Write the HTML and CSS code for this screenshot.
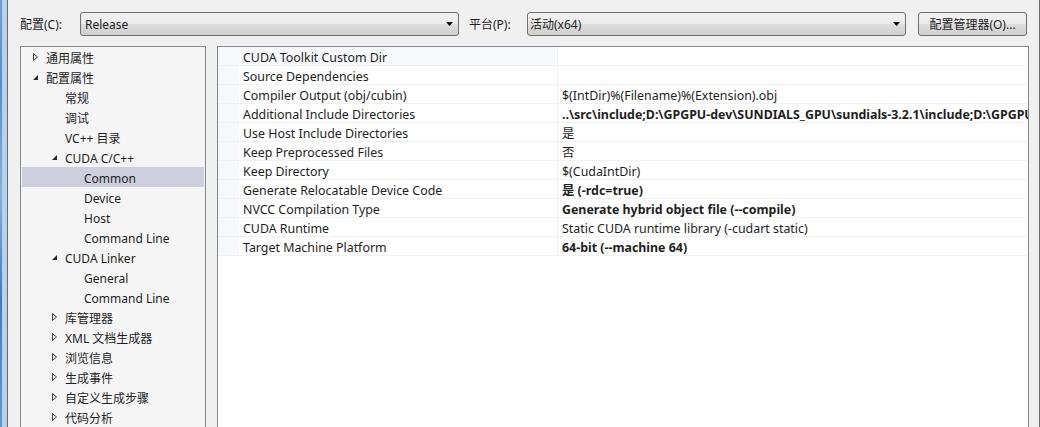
FILE: index.html
```html
<!DOCTYPE html>
<html>
<head>
<meta charset="utf-8">
<link rel="stylesheet" href="styles.css">
</head>
<body>
<div class="screen">
  <div class="desk"></div>
  <div class="window">
    <div class="topbar">
      <span class="lbl">配置(C):</span>
      <div class="combo combo1"><span>Release</span><svg class="arr" width="7" height="4" viewBox="0 0 7 4"><path d="M0 0H7L3.5 4Z" fill="#000"/></svg></div>
      <span class="lbl lbl2">平台(P):</span>
      <div class="combo combo2"><span>活动(x64)</span><svg class="arr" width="7" height="4" viewBox="0 0 7 4"><path d="M0 0H7L3.5 4Z" fill="#000"/></svg></div>
      <div class="btn">配置管理器(O)...</div>
    </div>
    <div class="body">
      <div class="tree">
        <div class="trow l0"><svg class="tw" width="13" height="8" viewBox="0 0 13 8"><path d="M0.5 0.5L4.5 4L0.5 7.5Z" fill="none" stroke="#3c3c3c"/></svg><span>通用属性</span></div>
        <div class="trow l0"><svg class="tw" width="13" height="8" viewBox="0 0 13 8"><path d="M5 2V7H0Z" fill="#262626"/></svg><span>配置属性</span></div>
        <div class="trow l1"><span class="tw"></span><span>常规</span></div>
        <div class="trow l1"><span class="tw"></span><span>调试</span></div>
        <div class="trow l1"><span class="tw"></span><span>VC++ 目录</span></div>
        <div class="trow l1"><svg class="tw" width="13" height="8" viewBox="0 0 13 8"><path d="M5 2V7H0Z" fill="#262626"/></svg><span>CUDA C/C++</span></div>
        <div class="trow l2 sel"><span class="tw"></span><span>Common</span></div>
        <div class="trow l2"><span class="tw"></span><span>Device</span></div>
        <div class="trow l2"><span class="tw"></span><span>Host</span></div>
        <div class="trow l2"><span class="tw"></span><span>Command Line</span></div>
        <div class="trow l1"><svg class="tw" width="13" height="8" viewBox="0 0 13 8"><path d="M5 2V7H0Z" fill="#262626"/></svg><span>CUDA Linker</span></div>
        <div class="trow l2"><span class="tw"></span><span>General</span></div>
        <div class="trow l2"><span class="tw"></span><span>Command Line</span></div>
        <div class="trow l1"><svg class="tw" width="13" height="8" viewBox="0 0 13 8"><path d="M0.5 0.5L4.5 4L0.5 7.5Z" fill="none" stroke="#3c3c3c"/></svg><span>库管理器</span></div>
        <div class="trow l1"><svg class="tw" width="13" height="8" viewBox="0 0 13 8"><path d="M0.5 0.5L4.5 4L0.5 7.5Z" fill="none" stroke="#3c3c3c"/></svg><span>XML 文档生成器</span></div>
        <div class="trow l1"><svg class="tw" width="13" height="8" viewBox="0 0 13 8"><path d="M0.5 0.5L4.5 4L0.5 7.5Z" fill="none" stroke="#3c3c3c"/></svg><span>浏览信息</span></div>
        <div class="trow l1"><svg class="tw" width="13" height="8" viewBox="0 0 13 8"><path d="M0.5 0.5L4.5 4L0.5 7.5Z" fill="none" stroke="#3c3c3c"/></svg><span>生成事件</span></div>
        <div class="trow l1"><svg class="tw" width="13" height="8" viewBox="0 0 13 8"><path d="M0.5 0.5L4.5 4L0.5 7.5Z" fill="none" stroke="#3c3c3c"/></svg><span>自定义生成步骤</span></div>
        <div class="trow l1"><svg class="tw" width="13" height="8" viewBox="0 0 13 8"><path d="M0.5 0.5L4.5 4L0.5 7.5Z" fill="none" stroke="#3c3c3c"/></svg><span>代码分析</span></div>
      </div>
      <div class="grid">
        <div class="prow first"><div class="gut"></div><div class="name">CUDA Toolkit Custom Dir</div><div class="val"></div></div>
        <div class="prow"><div class="gut"></div><div class="name">Source Dependencies</div><div class="val"></div></div>
        <div class="prow"><div class="gut"></div><div class="name">Compiler Output (obj/cubin)</div><div class="val">$(IntDir)%(Filename)%(Extension).obj</div></div>
        <div class="prow"><div class="gut"></div><div class="name">Additional Include Directories</div><div class="val b">..\src\include;D:\GPGPU-dev\SUNDIALS_GPU\sundials-3.2.1\include;D:\GPGPU-dev\SUNDIALS_GPU\include</div></div>
        <div class="prow"><div class="gut"></div><div class="name">Use Host Include Directories</div><div class="val">是</div></div>
        <div class="prow"><div class="gut"></div><div class="name">Keep Preprocessed Files</div><div class="val">否</div></div>
        <div class="prow"><div class="gut"></div><div class="name">Keep Directory</div><div class="val">$(CudaIntDir)</div></div>
        <div class="prow"><div class="gut"></div><div class="name">Generate Relocatable Device Code</div><div class="val b">是 (-rdc=true)</div></div>
        <div class="prow"><div class="gut"></div><div class="name">NVCC Compilation Type</div><div class="val b">Generate hybrid object file (--compile)</div></div>
        <div class="prow"><div class="gut"></div><div class="name">CUDA Runtime</div><div class="val">Static CUDA runtime library (-cudart static)</div></div>
        <div class="prow"><div class="gut"></div><div class="name">Target Machine Platform</div><div class="val b">64-bit (--machine 64)</div></div>
      </div>
    </div>
  </div>
</div>
</body>
</html>
```
FILE: styles.css
```css
* { box-sizing: border-box; }
html, body { margin: 0; padding: 0; }
body {
  width: 1040px;
  height: 427px;
  overflow: hidden;
  background: #f0f0f0;
  font-family: "Segoe UI", "Noto Sans", "Noto Sans CJK SC", sans-serif;
  font-size: 12px;
  color: #1e1e1e;
}
.screen { display: flex; height: 427px; width: 1040px; }
.desk {
  width: 8px;
  flex: none;
  background: linear-gradient(180deg, #6aa0d8 0%, #4f8fd0 20%, #7db2e0 45%, #3d7cc4 70%, #5c9ad6 100%);
  border-right: 1px solid #5d6b7c;
  box-shadow: inset -5px 0 0 #b9d0ea;
}
.window {
  flex: 1;
  min-width: 0;
  display: flex;
  flex-direction: column;
  border-right: 1px solid #6b6b6b;
  padding-right: 10px;
}
.topbar {
  height: 46px;
  flex: none;
  display: flex;
  align-items: center;
  padding: 2px 0 0 12px;
}
.lbl { width: 60px; flex: none; white-space: nowrap; }
.lbl2 { margin-left: 10px; width: 58px; }
.combo, .btn {
  height: 24px;
  flex: none;
  border: 1px solid #707070;
  border-radius: 3px;
  background: linear-gradient(180deg, #f2f2f2 0%, #ebebeb 50%, #dddddd 51%, #cfcfcf 100%);
  display: flex;
  align-items: center;
  white-space: nowrap;
}
.combo { width: 379px; padding-left: 4px; justify-content: space-between; padding-right: 5px; }
.combo2 { padding-left: 2px; }
.btn { margin-left: 12px; width: 109px; justify-content: center; }
.arr { flex: none; }
.body {
  flex: 1;
  min-width: 0;
  display: flex;
  padding-left: 12px;
  gap: 11px;
}
.tree {
  width: 186px;
  flex: none;
  border: 1px solid #828790;
  border-bottom: none;
  background: #f5f5f5;
  padding: 0 1px;
}
.trow {
  height: 20px;
  display: flex;
  align-items: center;
  white-space: nowrap;
  padding-top: 2px;
}
.trow .tw { margin-top: -2px; }
.trow.l0 { padding-left: 11px; }
.trow.l1 { padding-left: 30px; }
.trow.l2 { padding-left: 49px; }
.tw { width: 13px; flex: none; display: block; }
.trow.sel { background: #cdd0dc; }
.grid {
  flex: 1;
  min-width: 0;
  border: 1px solid #828790;
  border-bottom: none;
  background: #fff;
  overflow: hidden;
  font-size: 12.4px;
}
.prow {
  height: 19px;
  display: flex;
  border-bottom: 1px solid #eef1f6;
  white-space: nowrap;
}
.prow .gut { width: 21px; flex: none; background: #f6f8fb; }
.prow .name { width: 319px; flex: none; padding: 2px 0 0 4px; display: flex; align-items: center; border-right: 1px solid #eef1f6; }
.prow .val { flex: 1; min-width: 0; padding: 2px 0 0 4px; display: flex; align-items: center; overflow: hidden; }
.prow.first .name { background: #f6f8fc; }
.val.b { font-weight: bold; }
```
